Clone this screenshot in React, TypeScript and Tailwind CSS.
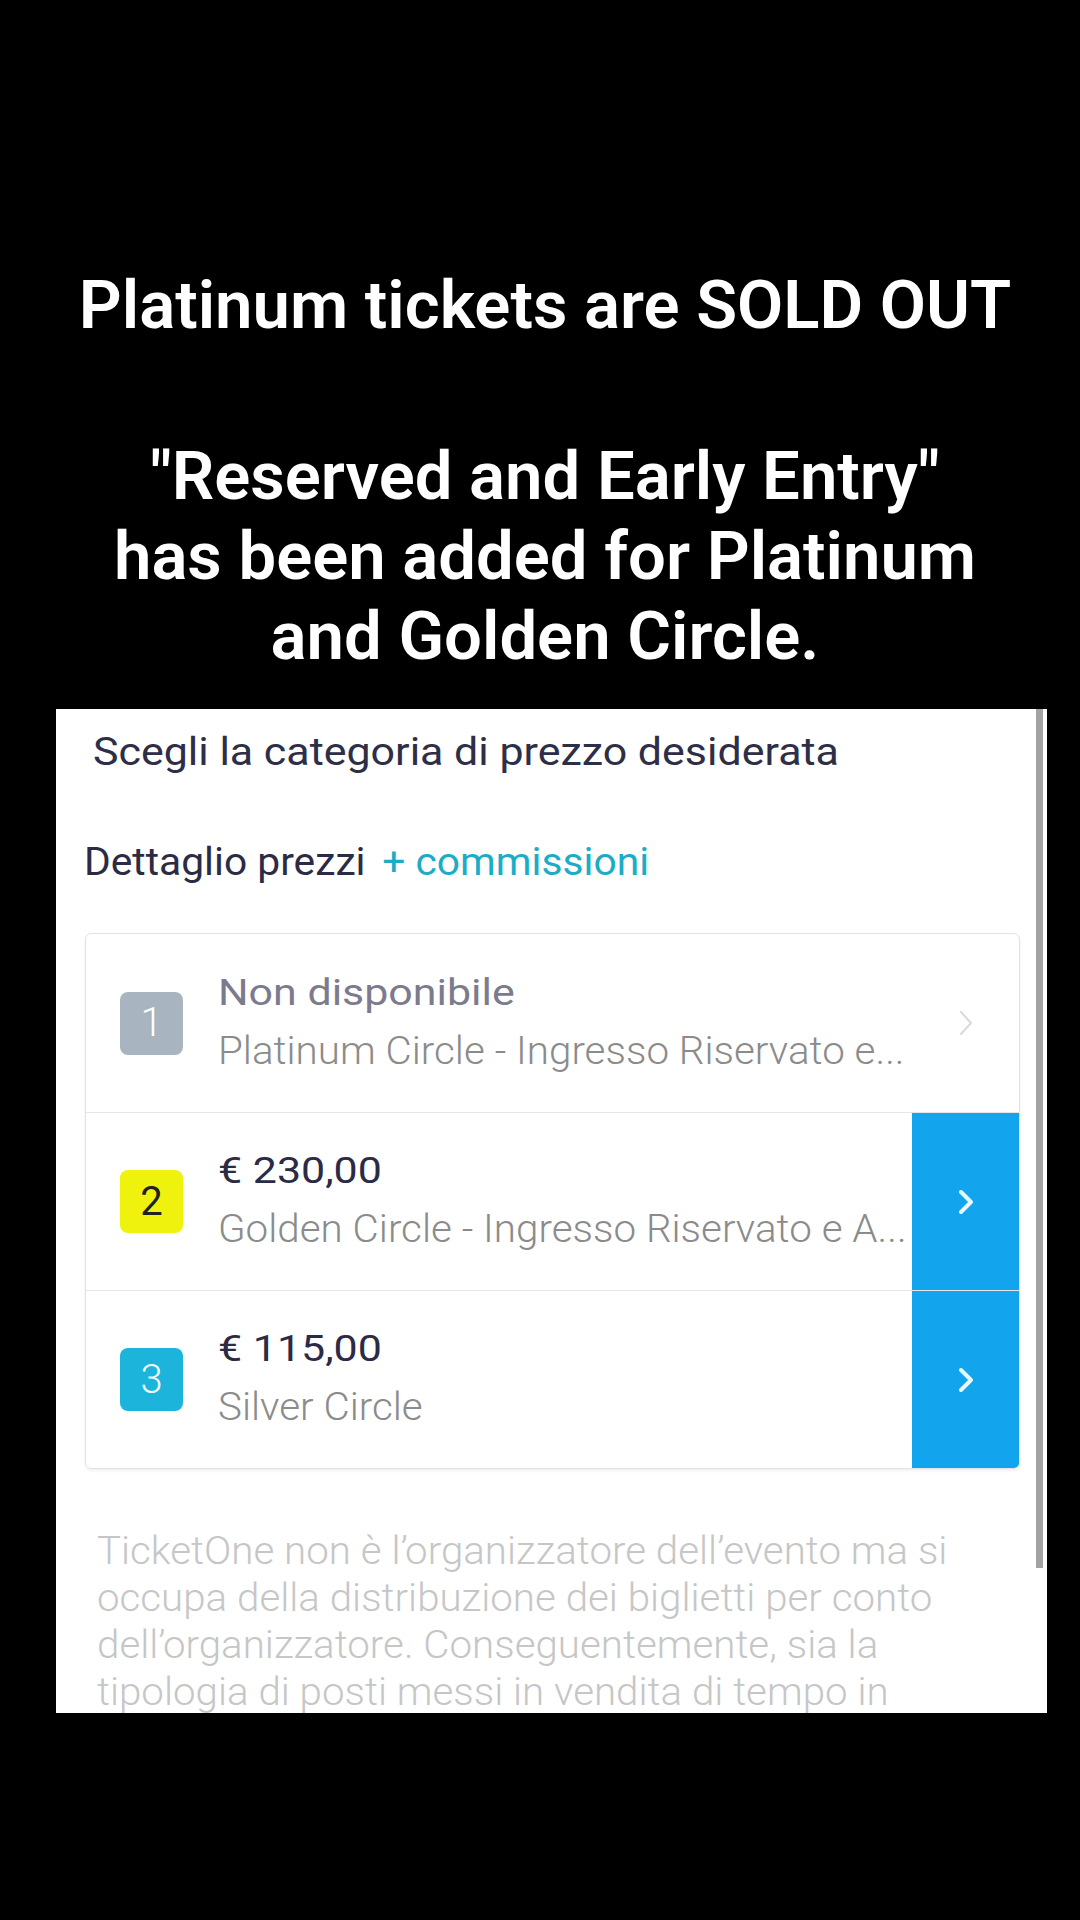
import React from "react";

function S({ children, className = "" }: { children: React.ReactNode; className?: string }) {
  return (
    <span className={`inline-block whitespace-nowrap origin-left ${className}`}>
      {children}
    </span>
  );
}

function Chevron({ blue }: { blue: boolean }) {
  if (blue) {
    return (
      <svg width="18" height="28" viewBox="0 0 18 28" fill="none">
        <polyline points="4,4 14,14 4,24" stroke="#e8f8ff" strokeWidth="4" strokeLinecap="round" strokeLinejoin="round" />
      </svg>
    );
  }
  return (
    <svg width="14" height="28" viewBox="0 0 14 28" fill="none">
      <polyline points="2,3 12,14 2,25" stroke="#dadada" strokeWidth="2" strokeLinecap="round" strokeLinejoin="round" />
    </svg>
  );
}

type RowProps = {
  n: string;
  badge: string;
  digit: string;
  top: string;
  topColor: string;
  bottom: string;
  blue: boolean;
  first?: boolean;
};

function Row({ n, badge, digit, top, topColor, bottom, blue, first }: RowProps) {
  return (
    <div className={`flex h-[178px] ${first ? "" : "border-t border-[#e6e6e6]"}`}>
      <div className="flex items-center pl-[34px]">
        <div className={`flex h-[63px] w-[63px] items-center justify-center rounded-[8px] ${badge}`}>
          <span className={`text-[40px] leading-none ${digit}`}>{n}</span>
        </div>
      </div>
      <div className="flex min-w-0 flex-1 flex-col justify-center pl-[35px] pb-[3px]">
        <div className={`text-[37px] leading-[58px] ${topColor}`}>
          <S className="scale-x-[1.16]">{top}</S>
        </div>
        <div className="text-[38px] font-light leading-[58px] text-[#8b8b8b]">
          <S className="scale-x-[1.062]">{bottom}</S>
        </div>
      </div>
      <div className={`flex w-[107px] items-center justify-center ${blue ? "bg-[#12a5ee]" : ""}`}>
        <Chevron blue={blue} />
      </div>
    </div>
  );
}

export default function App() {
  return (
    <div className="h-[1920px] w-[1080px] overflow-hidden bg-black">
      <div className="pl-[10px] pt-[264px] text-center font-[Roboto,sans-serif] text-[67px] font-semibold text-white">
        <p className="leading-[82px]">Platinum tickets are SOLD OUT</p>
        <div className="mt-[90px] leading-[80px]">
          <p>"Reserved and Early Entry"</p>
          <p>has been added for Platinum</p>
          <p>and Golden Circle.</p>
        </div>
      </div>

      <div className="relative ml-[56px] mt-[33px] h-[1004px] w-[991px] overflow-hidden bg-white font-[Roboto,sans-serif]">
        <div className="pl-[37px] pt-[21px] text-[38px] leading-[44px] text-[#2e2e47]">
          <S className="scale-x-[1.13]">Scegli la categoria di prezzo desiderata</S>
        </div>

        <div className="mt-[65px] pl-[28px] text-[39px] leading-[46px] text-[#2b2b45]">
          <S className="scale-x-[1.045]">
            Dettaglio prezzi<span className="ml-[16px] text-[#1badc7]">+ commissioni</span>
          </S>
        </div>

        <div className="ml-[29px] mt-[48px] w-[935px] overflow-hidden rounded-[6px] border border-[#e2e2e2] shadow-[0_2px_3px_rgba(0,0,0,0.06)]">
          <Row
            first
            n="1"
            badge="bg-[#a8b5c0]"
            digit="font-light text-white"
            top="Non disponibile"
            topColor="text-[#7c7b8d]"
            bottom="Platinum Circle - Ingresso Riservato e..."
            blue={false}
          />
          <Row
            n="2"
            badge="bg-[#eef20c]"
            digit="font-normal text-[#222222]"
            top="€ 230,00"
            topColor="text-[#2b2b46]"
            bottom="Golden Circle - Ingresso Riservato e A..."
            blue
          />
          <Row
            n="3"
            badge="bg-[#1db4dc]"
            digit="font-light text-[#effcff]"
            top="€ 115,00"
            topColor="text-[#2b2b46]"
            bottom="Silver Circle"
            blue
          />
        </div>

        <div className="mt-[59px] pl-[41px] text-[38px] font-light leading-[47px] text-[#c6c6c6]">
          <div><S className="scale-x-[1.06]">TicketOne non è l’organizzatore dell’evento ma si</S></div>
          <div><S className="scale-x-[1.06]">occupa della distribuzione dei biglietti per conto</S></div>
          <div><S className="scale-x-[1.06]">dell’organizzatore. Conseguentemente, sia la</S></div>
          <div><S className="scale-x-[1.06]">tipologia di posti messi in vendita di tempo in</S></div>
        </div>

        <div className="absolute right-[4px] top-0 h-[859px] w-[7px] bg-[#a3a3a3]" />
      </div>
    </div>
  );
}
